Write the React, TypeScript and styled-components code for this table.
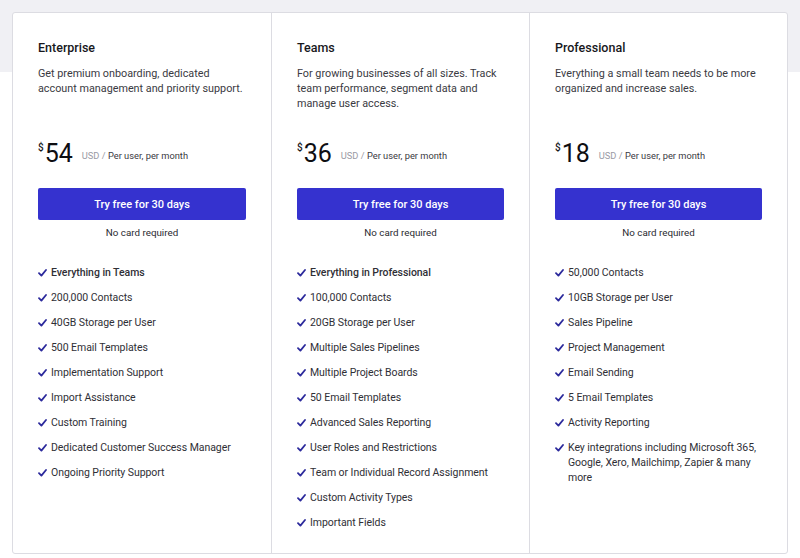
import React from "react";
import styled, { createGlobalStyle } from "styled-components";

const GlobalStyle = createGlobalStyle`
  html, body {
    margin: 0;
    padding: 0;
  }
  body {
    font-family: Roboto, Inter, "Liberation Sans", sans-serif;
    background: linear-gradient(to bottom, #f0f0f4 0, #f0f0f4 72px, #ffffff 72px);
    min-height: 558px;
    -webkit-font-smoothing: antialiased;
  }
`;

const Page = styled.div`
  padding: 12px 12px 4px 12px;
`;

const Card = styled.div`
  display: grid;
  grid-template-columns: repeat(3, 1fr);
  height: 542px;
  box-sizing: border-box;
  background: #ffffff;
  border: 1px solid #dcdce2;
  border-radius: 3px;
`;

const Column = styled.section<{ $first?: boolean }>`
  display: flex;
  flex-direction: column;
  padding: 27px 25px 0 25px;
  border-left: ${(p) => (p.$first ? "none" : "1px solid #dcdce2")};
`;

const Title = styled.h2`
  margin: 0;
  font-size: 12.5px;
  line-height: 16px;
  font-weight: 500;
  color: #17171c;
`;

const Description = styled.p`
  margin: 10px 0 0 0;
  height: 69px;
  font-size: 10.8px;
  line-height: 15px;
  color: #3a3a42;
`;

const PriceRow = styled.div`
  display: flex;
  align-items: flex-start;
  height: 26px;
  margin-top: 6px;
`;

const Currency = styled.span`
  font-size: 10px;
  line-height: 10px;
  font-weight: 500;
  color: #17171c;
  margin-top: 2px;
  margin-right: 1px;
`;

const Amount = styled.span`
  font-size: 25px;
  line-height: 26px;
  font-weight: 400;
  color: #0e0e12;
`;

const Unit = styled.span`
  font-size: 9.3px;
  line-height: 12px;
  margin-top: 9px;
  margin-left: 9px;
  color: #3a3a42;
`;

const Muted = styled.span`
  color: #9a9aa4;
`;

const Button = styled.button`
  margin-top: 21px;
  height: 32px;
  width: 100%;
  border: none;
  border-radius: 2px;
  background: #3532cf;
  color: #ffffff;
  font-family: inherit;
  font-size: 11px;
  font-weight: 500;
  cursor: pointer;
`;

const Note = styled.div`
  margin-top: 7px;
  text-align: center;
  font-size: 9.8px;
  line-height: 12px;
  color: #2a2a30;
`;

const Features = styled.ul`
  list-style: none;
  margin: 26px 0 0 0;
  padding: 0;
  display: flex;
  flex-direction: column;
  gap: 10px;
`;

const Feature = styled.li<{ $bold?: boolean }>`
  display: flex;
  align-items: flex-start;
  gap: 4px;
  font-size: 10.5px;
  letter-spacing: -0.05px;
  line-height: 15px;
  color: #2f2f36;
  font-weight: ${(p) => (p.$bold ? 500 : 400)};
`;

const CheckBox = styled.span`
  flex: none;
  width: 9px;
  height: 15px;
  display: flex;
  align-items: center;
  color: #2c2a9c;
`;

const Check = () => (
  <CheckBox>
    <svg width="9" height="8" viewBox="0 0 9 8" fill="none">
      <path
        d="M1 4.2 L3.4 6.6 L8 1"
        stroke="currentColor"
        strokeWidth="1.8"
        strokeLinecap="round"
        strokeLinejoin="round"
      />
    </svg>
  </CheckBox>
);

type Plan = {
  name: string;
  description: string;
  price: string;
  features: string[];
  boldFirst?: boolean;
};

const plans: Plan[] = [
  {
    name: "Enterprise",
    description:
      "Get premium onboarding, dedicated account management and priority support.",
    price: "54",
    boldFirst: true,
    features: [
      "Everything in Teams",
      "200,000 Contacts",
      "40GB Storage per User",
      "500 Email Templates",
      "Implementation Support",
      "Import Assistance",
      "Custom Training",
      "Dedicated Customer Success Manager",
      "Ongoing Priority Support",
    ],
  },
  {
    name: "Teams",
    description:
      "For growing businesses of all sizes. Track team performance, segment data and manage user access.",
    price: "36",
    boldFirst: true,
    features: [
      "Everything in Professional",
      "100,000 Contacts",
      "20GB Storage per User",
      "Multiple Sales Pipelines",
      "Multiple Project Boards",
      "50 Email Templates",
      "Advanced Sales Reporting",
      "User Roles and Restrictions",
      "Team or Individual Record Assignment",
      "Custom Activity Types",
      "Important Fields",
    ],
  },
  {
    name: "Professional",
    description:
      "Everything a small team needs to be more organized and increase sales.",
    price: "18",
    features: [
      "50,000 Contacts",
      "10GB Storage per User",
      "Sales Pipeline",
      "Project Management",
      "Email Sending",
      "5 Email Templates",
      "Activity Reporting",
      "Key integrations including Microsoft 365, Google, Xero, Mailchimp, Zapier & many more",
    ],
  },
];

export default function App() {
  return (
    <>
      <GlobalStyle />
      <Page>
        <Card>
          {plans.map((plan, i) => (
            <Column key={plan.name} $first={i === 0}>
              <Title>{plan.name}</Title>
              <Description>{plan.description}</Description>
              <PriceRow>
                <Currency>$</Currency>
                <Amount>{plan.price}</Amount>
                <Unit>
                  <Muted>USD /</Muted> Per user, per month
                </Unit>
              </PriceRow>
              <Button>Try free for 30 days</Button>
              <Note>No card required</Note>
              <Features>
                {plan.features.map((f, j) => (
                  <Feature key={f} $bold={plan.boldFirst && j === 0}>
                    <Check />
                    <span>{f}</span>
                  </Feature>
                ))}
              </Features>
            </Column>
          ))}
        </Card>
      </Page>
    </>
  );
}
